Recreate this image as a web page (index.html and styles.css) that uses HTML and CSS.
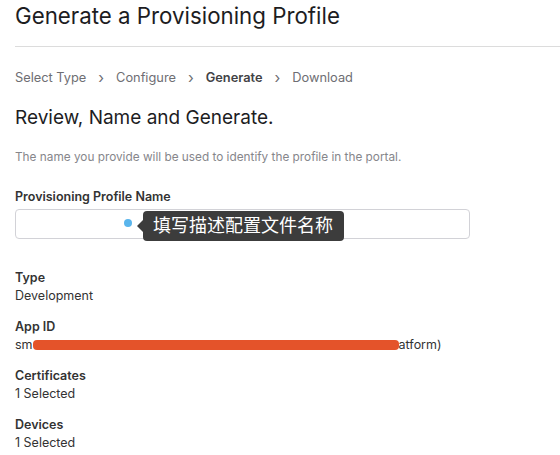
FILE: index.html
```html
<!DOCTYPE html>
<html lang="en">
<head>
  <meta charset="UTF-8">
  <title>Generate a Provisioning Profile</title>
  <link rel="stylesheet" href="styles.css">
</head>
<body>
  <div class="page">
    <header class="page-head">
      <h1>Generate a Provisioning Profile</h1>
    </header>

    <nav class="steps">
      <span>Select Type</span>
      <span class="sep">&#8250;</span>
      <span>Configure</span>
      <span class="sep">&#8250;</span>
      <span class="current">Generate</span>
      <span class="sep">&#8250;</span>
      <span>Download</span>
    </nav>

    <h2>Review, Name and Generate.</h2>
    <p class="hint">The name you provide will be used to identify the profile in the portal.</p>

    <label class="field-label" for="profile-name">Provisioning Profile Name</label>
    <div class="field">
      <input id="profile-name" type="text">
      <span class="dot"></span>
      <span class="tip">填写描述配置文件名称</span>
    </div>

    <dl class="summary">
      <dt>Type</dt>
      <dd>Development</dd>
      <dt>App ID</dt>
      <dd class="redacted">sm<span class="mask"></span>atform)</dd>
      <dt>Certificates</dt>
      <dd>1 Selected</dd>
      <dt>Devices</dt>
      <dd>1 Selected</dd>
    </dl>
  </div>
</body>
</html>
```

FILE: styles.css
```css
:root {
  --text: #1d1d1f;
  --muted: #6e6e73;
  --line: #dcdcdc;
}
* { box-sizing: border-box; margin: 0; padding: 0; }
body {
  font-family: Inter, "Noto Sans CJK SC", sans-serif;
  color: var(--text);
  background: #fff;
}
.page {
  padding-left: 15px;
}
.page-head {
  border-bottom: 1px solid var(--line);
  padding-bottom: 14px;
}
h1 {
  font-size: 22.3px;
  font-weight: 400;
  line-height: 32px;
}
.steps {
  display: flex;
  gap: 12px;
  margin-top: 22px;
  font-size: 12.8px;
  line-height: 18px;
  color: var(--muted);
}
.steps .sep { font-size: 15px; line-height: 17px; }
.steps .current { font-weight: 600; color: #424245; }
h2 {
  margin-top: 19px;
  font-size: 19px;
  font-weight: 400;
  line-height: 24px;
}
.hint {
  margin-top: 19px;
  font-size: 11.8px;
  line-height: 16px;
  color: #86868b;
}
.field-label {
  display: block;
  margin-top: 24px;
  font-size: 12.5px;
  font-weight: 600;
  line-height: 16px;
  color: #333;
}
.field {
  position: relative;
  margin-top: 4px;
  width: 455px;
}
.field input {
  display: block;
  width: 100%;
  height: 30px;
  border: 1px solid #d2d2d7;
  border-radius: 4px;
  background: #fff;
}
.dot {
  position: absolute;
  left: 109px;
  top: 10px;
  width: 8px;
  height: 8px;
  border-radius: 50%;
  background: #5ab5ec;
}
.tip {
  position: absolute;
  left: 128px;
  top: 2px;
  height: 30px;
  padding: 0 11px 0 10px;
  border-radius: 4px;
  background: #3c3c3c;
  color: #fff;
  font-size: 18px;
  line-height: 30px;
  white-space: nowrap;
}
.tip::before {
  content: "";
  position: absolute;
  left: -6px;
  top: 9px;
  border-top: 6px solid transparent;
  border-bottom: 6px solid transparent;
  border-right: 6px solid #3c3c3c;
}
.summary {
  margin-top: 30px;
  font-size: 12.5px;
  line-height: 18px;
}
.summary dt {
  font-weight: 600;
  color: #333;
  margin-top: 13px;
}
.summary dt:first-child { margin-top: 0; }
.summary dd { color: #333; }
.redacted { white-space: nowrap; }
/* red marker stroke drawn over the bundle id */
.mask {
  display: inline-block;
  width: 366px;
  height: 10px;
  vertical-align: -1px;
  border-radius: 4px;
  background: #e4532a;
}
```
